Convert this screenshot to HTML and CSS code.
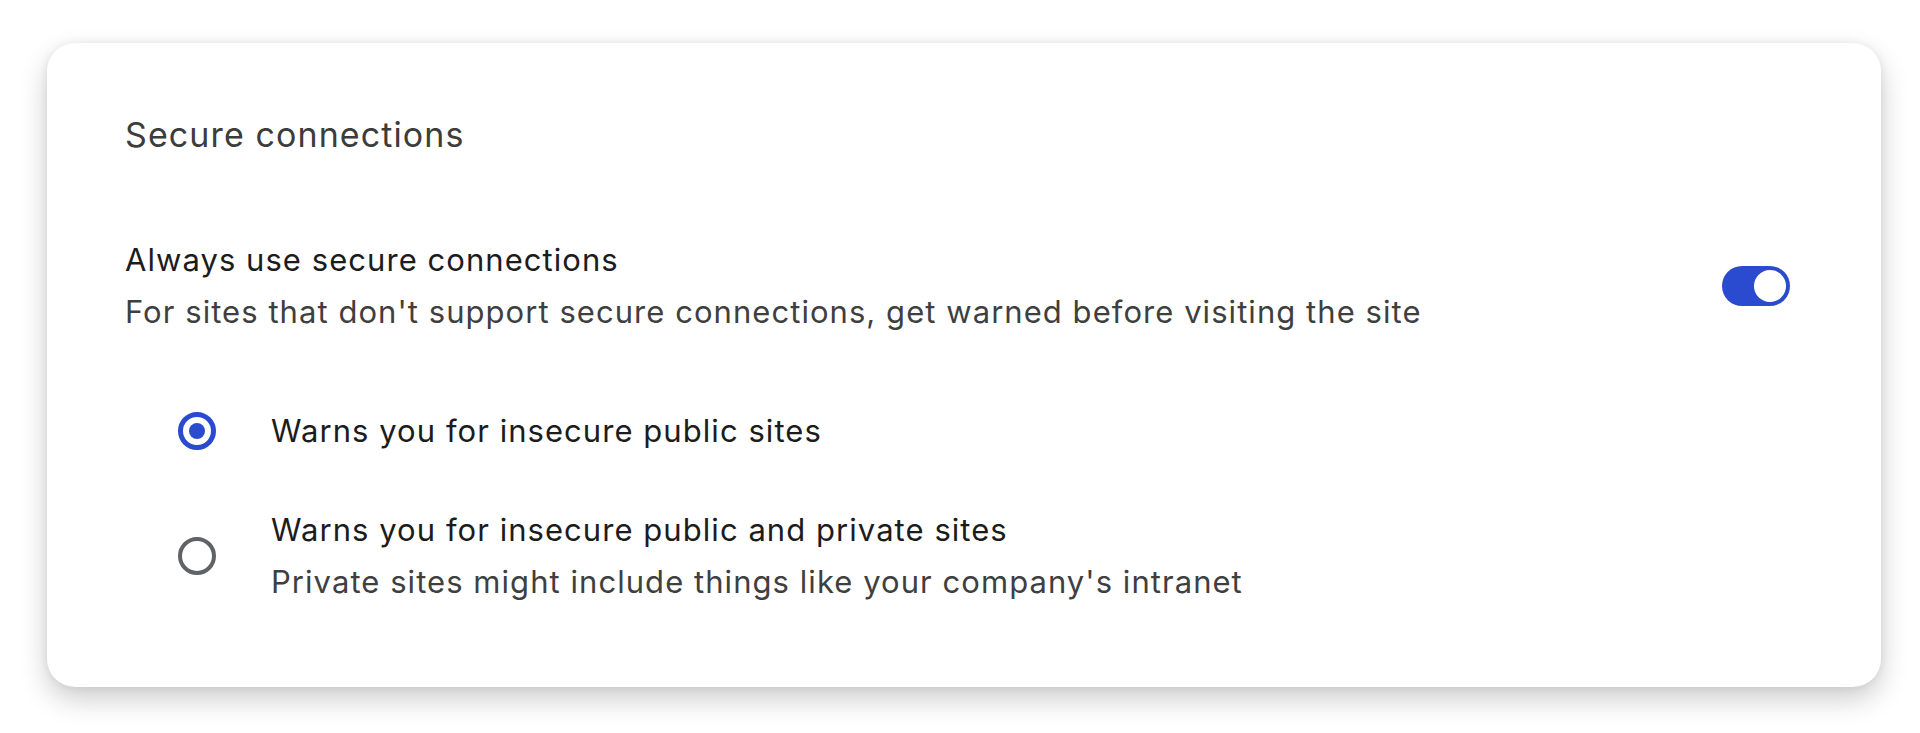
FILE: index.html
```html
<!DOCTYPE html>
<html lang="en">
<head>
    <meta charset="UTF-8">
    <meta name="viewport" content="width=device-width, initial-scale=1.0">
    <title>Secure connections</title>
    <link rel="stylesheet" href="styles.css">
</head>
<body>

    <div class="page">
        <section class="card">
            <h2 class="card-title">Secure connections</h2>

            <div class="setting-row">
                <div class="setting-text">
                    <div class="label">Always use secure connections</div>
                    <div class="sublabel">For sites that don't support secure connections, get warned before visiting the site</div>
                </div>
                <span class="toggle on"><span class="knob"></span></span>
            </div>

            <div class="radio-group">
                <div class="radio-row">
                    <span class="radio checked"></span>
                    <div class="setting-text">
                        <div class="label">Warns you for insecure public sites</div>
                    </div>
                </div>
                <div class="radio-row">
                    <span class="radio"></span>
                    <div class="setting-text">
                        <div class="label">Warns you for insecure public and private sites</div>
                        <div class="sublabel">Private sites might include things like your company's intranet</div>
                    </div>
                </div>
            </div>
        </section>
    </div>

</body>
</html>
```

FILE: styles.css
```css
body {
    margin: 0;
    background-color: #fff;
    font-family: Inter, "Liberation Sans", Arial, sans-serif;
    color: #1c1c1c;
}

.page {
    padding: 43px 39px 46px 47px;
}

.card {
    height: 644px;
    box-sizing: border-box;
    padding: 70px 91px 0 78px;
    border-radius: 28px;
    background-color: #fff;
    box-shadow: 0 12px 28px rgba(0, 0, 0, 0.2), 0 0 10px rgba(0, 0, 0, 0.07);
}

.card-title {
    margin: 0;
    font-size: 34px;
    font-weight: 400;
    letter-spacing: 1.1px;
    line-height: 44px;
    color: #3c3c3c;
}

.setting-row {
    display: flex;
    align-items: center;
    justify-content: space-between;
    margin-top: 77px;
}

.label,
.sublabel {
    font-size: 31px;
    letter-spacing: 1.05px;
    line-height: 52px;
}

.sublabel {
    color: #3f3f3f;
}

/* toggle */
.toggle {
    display: inline-block;
    position: relative;
    width: 68px;
    height: 40px;
    border-radius: 20px;
    background-color: #2a4bcf;
    flex-shrink: 0;
}

.toggle .knob {
    position: absolute;
    top: 4px;
    right: 4px;
    width: 32px;
    height: 32px;
    border-radius: 50%;
    background-color: #fff;
}

/* radios */
.radio-group {
    margin-top: 67px;
    padding-left: 53px;
}

.radio-row {
    display: flex;
    align-items: center;
    gap: 55px;
    margin-bottom: 47px;
}

.radio {
    position: relative;
    width: 38px;
    height: 38px;
    box-sizing: border-box;
    border: 4px solid #5f6368;
    border-radius: 50%;
    flex-shrink: 0;
}

.radio.checked {
    border: 5px solid #2a4bcf;
}

.radio.checked::after {
    content: "";
    position: absolute;
    top: 6px;
    left: 6px;
    width: 16px;
    height: 16px;
    border-radius: 50%;
    background-color: #2a4bcf;
}
```
